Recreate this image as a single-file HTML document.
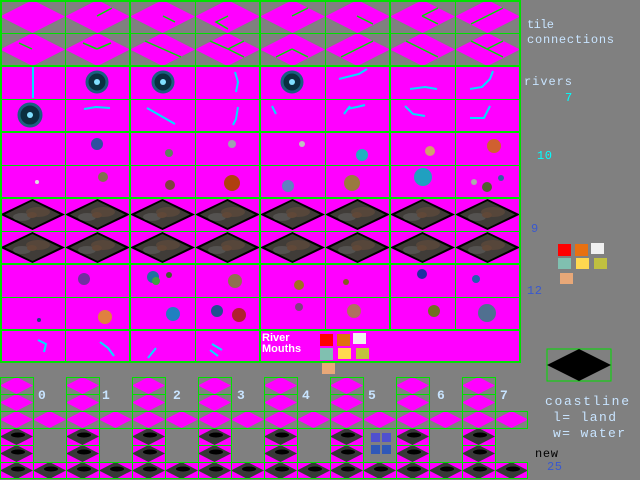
<!DOCTYPE html>
<html><head><meta charset="utf-8"><style>
html,body{margin:0;padding:0;background:#808080;width:640px;height:480px;overflow:hidden}
svg{position:absolute;left:0;top:0}
</style></head><body>
<svg width="640" height="480" viewBox="0 0 640 480" xmlns="http://www.w3.org/2000/svg" font-family="Liberation Mono, monospace">
<defs>
<g id="tc"><rect width="65" height="33" fill="#808080"/><polygon points="0,16.5 32.5,0 65,16.5 32.5,33" fill="#ff00ff"/></g>
<g id="dk"><rect width="65" height="33" fill="#ff00ff"/><polygon points="0,16.5 32.5,1 65,16.5 32.5,32" fill="#000"/>
<polygon points="5,16.5 32.5,3 60,16.5 32.5,30" fill="#403c38"/><ellipse cx="38" cy="14" rx="12" ry="5" fill="#56463a"/><ellipse cx="22" cy="19" rx="9" ry="4" fill="#545250"/><ellipse cx="32" cy="17" rx="5" ry="3" fill="#604838"/></g>
<g id="sc"><rect width="33" height="17" fill="#808080"/><polygon points="0,8.5 16.5,0 33,8.5 16.5,17" fill="#ff00ff"/></g>
<g id="sd"><rect width="33" height="17" fill="#ff00ff"/><polygon points="0,8.5 16.5,0 33,8.5 16.5,17" fill="#383838"/><ellipse cx="18" cy="7" rx="7" ry="2.5" fill="#000"/></g>
</defs>
<g>
<use href="#tc" x="0" y="0"/><use href="#tc" x="65" y="0"/><use href="#tc" x="130" y="0"/><use href="#tc" x="195" y="0"/><use href="#tc" x="260" y="0"/><use href="#tc" x="325" y="0"/><use href="#tc" x="390" y="0"/><use href="#tc" x="455" y="0"/>
<use href="#tc" x="0" y="33"/><use href="#tc" x="65" y="33"/><use href="#tc" x="130" y="33"/><use href="#tc" x="195" y="33"/><use href="#tc" x="260" y="33"/><use href="#tc" x="325" y="33"/><use href="#tc" x="390" y="33"/><use href="#tc" x="455" y="33"/>
</g>
<g stroke="#00e000" stroke-width="1.5" fill="none">
<path d="M97 16l15-8M163 16l12 6M228 16l-12 6l12 7M32 49l-13-6M97 49l-14-6M97 49l14-6M163 49l-18-8M163 49l18 8M228 49l-18-8M228 49l16-8M228 49l16 8M292 16l16-8M357 16l16 8M422 16l16-8M422 16l16 8M487 16l16-8M487 16l-16 8M292 49l-16 8M292 49l16 8M357 49l16-8M357 49l-16 8M422 49l-16-8M422 49l16 8M487 49l-16-8M487 49l16 8M487 49l16-8"/>
</g>
<rect x="0" y="66" width="520" height="297" fill="#ff00ff"/>
<g>
<use href="#dk" x="0" y="198"/><use href="#dk" x="65" y="198"/><use href="#dk" x="130" y="198"/><use href="#dk" x="195" y="198"/><use href="#dk" x="260" y="198"/><use href="#dk" x="325" y="198"/><use href="#dk" x="390" y="198"/><use href="#dk" x="455" y="198"/>
<use href="#dk" x="0" y="231"/><use href="#dk" x="65" y="231"/><use href="#dk" x="130" y="231"/><use href="#dk" x="195" y="231"/><use href="#dk" x="260" y="231"/><use href="#dk" x="325" y="231"/><use href="#dk" x="390" y="231"/><use href="#dk" x="455" y="231"/>
</g>
<g fill="#0a3040" stroke="#1a6080" stroke-width="3">
<circle cx="97" cy="82" r="10"/><circle cx="163" cy="82" r="10"/><circle cx="30" cy="115" r="11"/><circle cx="292" cy="82" r="10"/>
</g>
<g fill="#80e0ff"><circle cx="97" cy="82" r="3"/><circle cx="163" cy="82" r="3"/><circle cx="30" cy="115" r="3"/><circle cx="292" cy="82" r="3"/></g>
<g stroke="#00e0ff" stroke-width="2" fill="none">
<path d="M33 66v32M235 72l3 10l-2 10M238 107l-2 12l-3 6M339 79l20-5l8-5M276 114l-4-8M347 109l10-2l8-2M344 114l6-8M84 109l12-2l14 1M147 108l28 16M410 89l15-2l12 2M470 89l12-2l8-8l3-8M405 106l8 8l12 2M470 118l14 0l6-12M38 340l8 4l-2 8M100 342l8 6l6 8M148 358l8-10M212 344l10 6M210 350l8 6"/>
</g>
<g>
<circle cx="97" cy="144" r="6" fill="#3050a0"/><circle cx="169" cy="153" r="4" fill="#608060"/><circle cx="232" cy="144" r="4" fill="#a0a0b0"/><circle cx="302" cy="144" r="3" fill="#c0c0c0"/><circle cx="362" cy="155" r="6" fill="#20b0c0"/><circle cx="430" cy="151" r="5" fill="#d0a070"/><circle cx="494" cy="146" r="7" fill="#d06030"/>
<circle cx="37" cy="182" r="2" fill="#ddd"/><circle cx="103" cy="177" r="5" fill="#807050"/><circle cx="170" cy="185" r="5" fill="#804040"/><circle cx="232" cy="183" r="8" fill="#b04010"/><circle cx="288" cy="186" r="6" fill="#6080c0"/><circle cx="352" cy="183" r="8" fill="#9a7a40"/><circle cx="423" cy="177" r="9" fill="#20a0c0"/><circle cx="474" cy="182" r="3" fill="#aaa"/><circle cx="487" cy="187" r="5" fill="#506030"/><circle cx="501" cy="178" r="3" fill="#3060a0"/>
<circle cx="84" cy="279" r="6" fill="#7030a0"/><circle cx="153" cy="277" r="6" fill="#2070a0"/><circle cx="156" cy="281" r="4" fill="#40a040"/><circle cx="169" cy="275" r="3" fill="#406030"/><circle cx="235" cy="281" r="7" fill="#907050"/><circle cx="299" cy="285" r="5" fill="#a07020"/><circle cx="346" cy="282" r="3" fill="#806020"/><circle cx="422" cy="274" r="5" fill="#2030a0"/><circle cx="476" cy="279" r="4" fill="#2060b0"/>
<circle cx="39" cy="320" r="2" fill="#204080"/><circle cx="105" cy="317" r="7" fill="#e08040"/><circle cx="173" cy="314" r="7" fill="#2080c0"/><circle cx="217" cy="311" r="6" fill="#205090"/><circle cx="239" cy="315" r="7" fill="#b02030"/><circle cx="299" cy="307" r="4" fill="#804080"/><circle cx="354" cy="311" r="7" fill="#b07060"/><circle cx="434" cy="311" r="6" fill="#707020"/><circle cx="487" cy="313" r="9" fill="#507090"/>
</g>
<g stroke="#00e000" stroke-width="1">
<path d="M0 33.5H520M0 99.5H520M0 165.5H520M0 231.5H520M0 297.5H520"/>
<path d="M65.5 0V363M195.5 0V363M325.5 0V330M455.5 0V330"/>
</g>
<g stroke="#00e000" stroke-width="2">
<path d="M0 1H521M0 66H521M0 132H521M0 198H521M0 264H521M0 330H521M0 362H520"/>
<path d="M1 0V363M130 0V363M260 0V363M390 0V330M520 0V363"/>
</g>
<text x="262" y="341" font-family="Liberation Sans, sans-serif" font-weight="bold" font-size="11" fill="#fff">River</text>
<text x="262" y="352" font-family="Liberation Sans, sans-serif" font-weight="bold" font-size="11" fill="#fff">Mouths</text>
<rect x="320" y="334" width="13" height="12" fill="#f00"/><rect x="337" y="334" width="13" height="12" fill="#e07010"/><rect x="353" y="333" width="13" height="11" fill="#f0f0f0"/>
<rect x="320" y="348" width="13" height="12" fill="#80c0b0"/><rect x="338" y="348" width="13" height="11" fill="#ffd850"/><rect x="356" y="348" width="13" height="11" fill="#c0c040"/>
<rect x="322" y="363" width="13" height="11" fill="#e8a878"/>
<g fill="#c8e4ff" font-size="12">
<text x="527" y="28" textLength="27">tile</text><text x="527" y="43" textLength="87">connections</text><text x="524" y="85" textLength="48">rivers</text>
</g>
<g fill="#00ffff" font-size="12"><text x="565" y="101">7</text><text x="537" y="159" textLength="15">10</text></g>
<g fill="#3858d0" font-size="12"><text x="531" y="232">9</text><text x="527" y="294" textLength="15">12</text></g>
<rect x="558" y="244" width="13" height="12" fill="#f00"/><rect x="575" y="244" width="13" height="12" fill="#e87010"/><rect x="591" y="243" width="13" height="11" fill="#f0f0f0"/>
<rect x="558" y="258" width="13" height="11" fill="#80c0b0"/><rect x="576" y="258" width="13" height="11" fill="#ffd850"/><rect x="594" y="258" width="13" height="11" fill="#c0c040"/>
<rect x="560" y="273" width="13" height="11" fill="#e8a878"/>
<rect x="547" y="349" width="64" height="32" fill="#808080" stroke="#00e000"/>
<polygon points="547,365 579,349 611,365 579,381" fill="#000"/>
<g fill="#c8e4ff" font-size="13"><text x="545" y="405" textLength="84">coastline</text><text x="553" y="421" textLength="63">l= land</text><text x="553" y="437" textLength="72">w= water</text></g>
<text x="535" y="457" font-size="12" fill="#000" textLength="23">new</text>
<text x="547" y="470" font-size="12" fill="#3858d0" textLength="15">25</text>
<g id="g0">
<use href="#sc" x="0" y="377"/><use href="#sc" x="0" y="394"/><use href="#sc" x="0" y="411"/><use href="#sc" x="33" y="411"/>
<use href="#sd" x="0" y="428"/><use href="#sd" x="0" y="445"/><use href="#sd" x="0" y="462"/><use href="#sd" x="33" y="462"/>
</g>
<use href="#g0" x="66"/><use href="#g0" x="132"/><use href="#g0" x="198"/><use href="#g0" x="264"/><use href="#g0" x="330"/><use href="#g0" x="396"/><use href="#g0" x="462"/>
<g fill="#00e000">
<rect x="0" y="411" width="528" height="1"/><rect x="0" y="428" width="528" height="1"/><rect x="0" y="462" width="528" height="1"/><rect x="0" y="478" width="528" height="1"/>
<rect x="527" y="411" width="1" height="18"/><rect x="527" y="462" width="1" height="17"/>
<rect x="0" y="377" width="33" height="1"/><rect x="0" y="394" width="33" height="1"/><rect x="0" y="445" width="33" height="1"/><rect x="0" y="377" width="1" height="102"/><rect x="33" y="377" width="1" height="102"/>
<rect x="66" y="377" width="33" height="1"/><rect x="66" y="394" width="33" height="1"/><rect x="66" y="445" width="33" height="1"/><rect x="66" y="377" width="1" height="102"/><rect x="99" y="377" width="1" height="102"/>
<rect x="132" y="377" width="33" height="1"/><rect x="132" y="394" width="33" height="1"/><rect x="132" y="445" width="33" height="1"/><rect x="132" y="377" width="1" height="102"/><rect x="165" y="377" width="1" height="102"/>
<rect x="198" y="377" width="33" height="1"/><rect x="198" y="394" width="33" height="1"/><rect x="198" y="445" width="33" height="1"/><rect x="198" y="377" width="1" height="102"/><rect x="231" y="377" width="1" height="102"/>
<rect x="264" y="377" width="33" height="1"/><rect x="264" y="394" width="33" height="1"/><rect x="264" y="445" width="33" height="1"/><rect x="264" y="377" width="1" height="102"/><rect x="297" y="377" width="1" height="102"/>
<rect x="330" y="377" width="33" height="1"/><rect x="330" y="394" width="33" height="1"/><rect x="330" y="445" width="33" height="1"/><rect x="330" y="377" width="1" height="102"/><rect x="363" y="377" width="1" height="102"/>
<rect x="396" y="377" width="33" height="1"/><rect x="396" y="394" width="33" height="1"/><rect x="396" y="445" width="33" height="1"/><rect x="396" y="377" width="1" height="102"/><rect x="429" y="377" width="1" height="102"/>
<rect x="462" y="377" width="33" height="1"/><rect x="462" y="394" width="33" height="1"/><rect x="462" y="445" width="33" height="1"/><rect x="462" y="377" width="1" height="102"/><rect x="495" y="377" width="1" height="102"/>
</g>
<g fill="#c8e4ff" font-size="13" font-weight="bold">
<text x="38" y="399">0</text><text x="102" y="399">1</text><text x="173" y="399">2</text><text x="237" y="399">3</text><text x="302" y="399">4</text><text x="368" y="399">5</text><text x="437" y="399">6</text><text x="500" y="399">7</text>
</g>
<rect x="371" y="433" width="9" height="9" fill="#5050d0"/><rect x="382" y="433" width="9" height="9" fill="#5050d0"/><rect x="371" y="445" width="9" height="9" fill="#3058b8"/><rect x="382" y="445" width="9" height="9" fill="#3058b8"/>
</svg>
</body></html>
